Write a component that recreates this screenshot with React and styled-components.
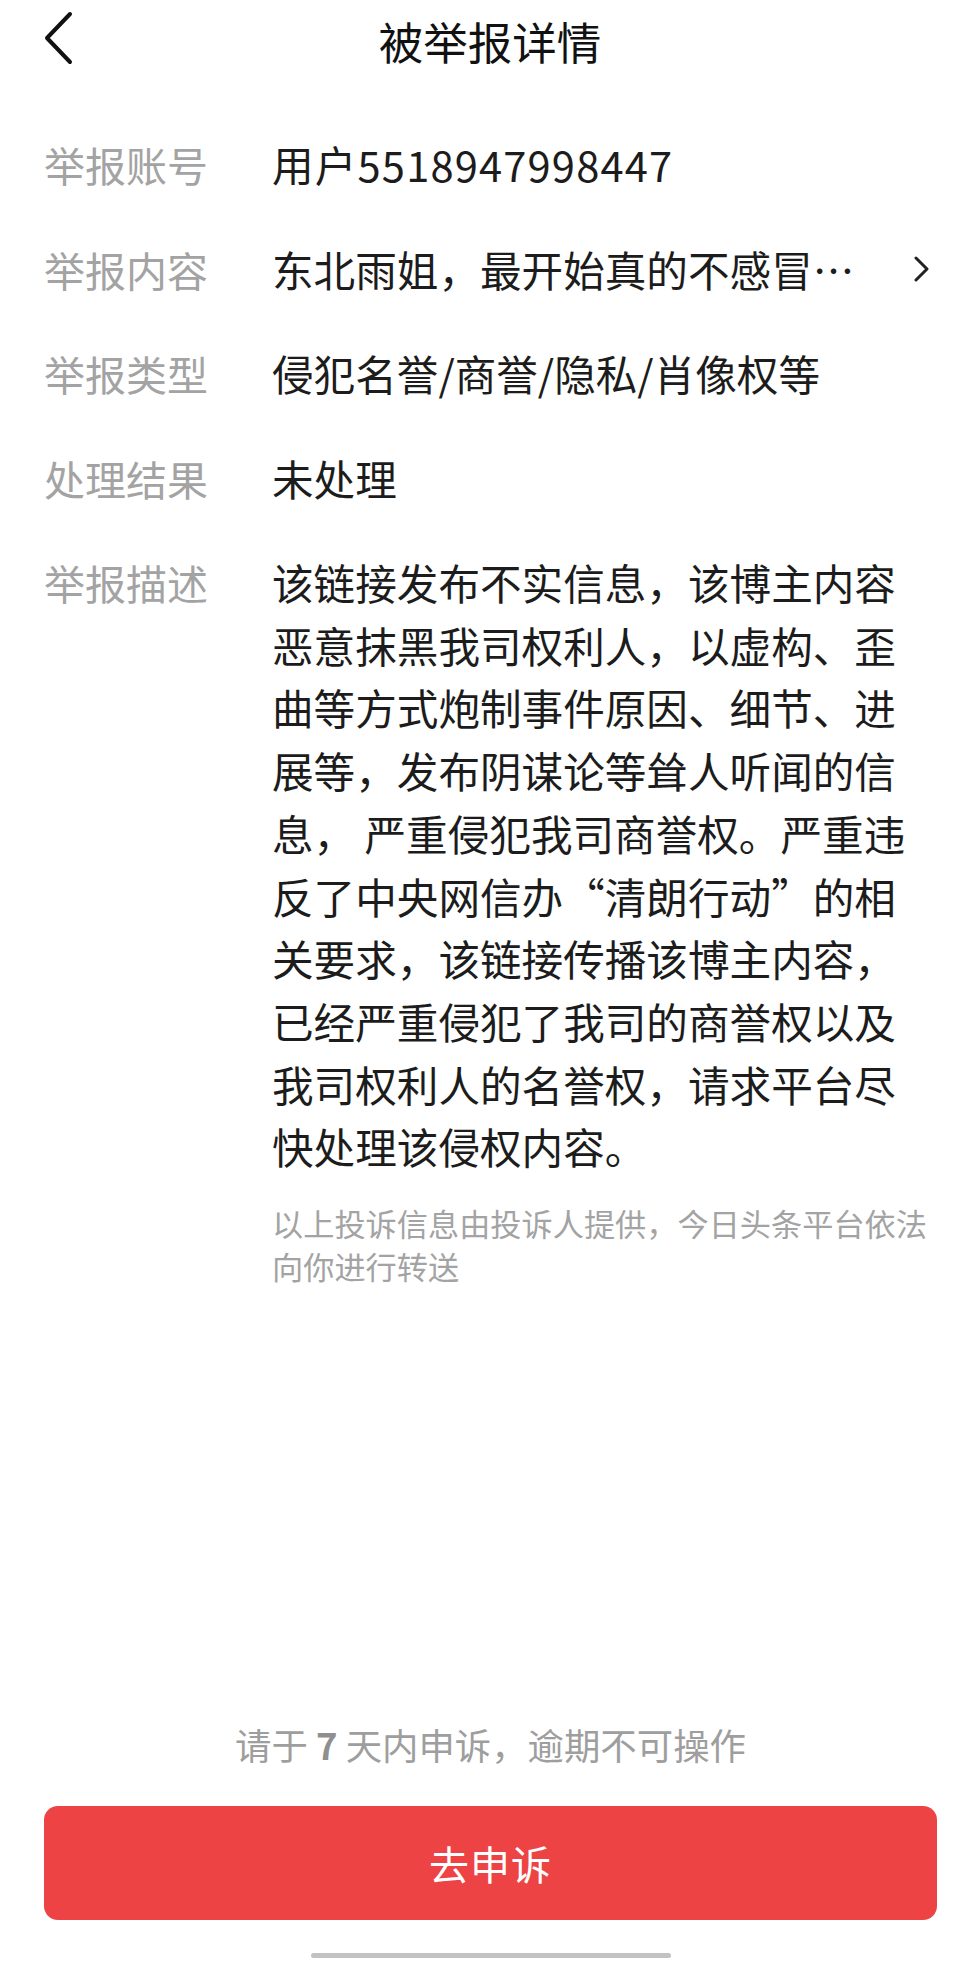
import React from "react";
import styled, { createGlobalStyle } from "styled-components";

const GlobalStyle = createGlobalStyle`
  html, body { margin: 0; padding: 0; background: #ffffff; }
  body {
    font-family: "Noto Sans CJK SC", "Noto Sans", sans-serif;
    -webkit-font-smoothing: antialiased;
  }
`;

const Page = styled.div`
  width: 980px;
  min-height: 1961px;
  display: flex;
  flex-direction: column;
  background: #fff;
  box-sizing: border-box;
`;

const Header = styled.header`
  position: relative;
  height: 84px;
  display: flex;
  align-items: center;
  justify-content: center;
`;

const BackButton = styled.button`
  position: absolute;
  left: 36px;
  top: 6px;
  width: 46px;
  height: 64px;
  padding: 0;
  border: 0;
  background: none;
  display: flex;
  align-items: center;
  justify-content: center;
`;

const Title = styled.h1`
  margin: 0;
  margin-top: -2px;
  font-size: 44.5px;
  font-weight: 400;
  color: #111;
  line-height: 60px;
`;

const Content = styled.main`
  flex: 1;
  display: flex;
  flex-direction: column;
  gap: 41.8px;
  padding: 49px 44px 0 44px;
`;

const Row = styled.div`
  display: flex;
  align-items: flex-start;
`;

const Label = styled.div`
  flex: 0 0 228px;
  font-size: 41px;
  line-height: 62.7px;
  color: #a3a3a3;
`;

const Value = styled.div`
  flex: 1;
  min-width: 0;
  display: flex;
  align-items: center;
  font-size: 41.6px;
  line-height: 62.7px;
  color: #1c1c1c;
`;

const ValueText = styled.span`
  flex: 1;
  white-space: nowrap;
  overflow: hidden;
  letter-spacing: ${(p) => (p.$spaced ? "1.2px" : "0")};
`;

const Chevron = styled.span`
  display: flex;
  align-items: center;
  margin-right: 6px;
`;

const Description = styled.div`
  width: 650px;
  font-size: 41.6px;
  line-height: 62.7px;
  color: #1c1c1c;
`;

const Note = styled.p`
  width: 664px;
  margin: 23px 0 0 0;
  font-size: 31.2px;
  line-height: 43px;
  color: #a3a3a3;
`;

const Footer = styled.footer`
  display: flex;
  flex-direction: column;
  align-items: center;
  padding: 0 43px 0 44px;
`;

const Hint = styled.div`
  font-size: 36.4px;
  line-height: 48px;
  color: #9e9e9e;
`;

const Strong = styled.b`
  font-weight: 700;
  color: #8f8f8f;
`;

const AppealButton = styled.button`
  margin-top: 38px;
  width: 100%;
  height: 114px;
  border: 0;
  border-radius: 14px;
  background: #ee4345;
  color: #fff;
  font-family: inherit;
  font-size: 40px;
  letter-spacing: 1px;
`;

const HomeBar = styled.div`
  margin-top: 33px;
  margin-bottom: 3px;
  width: 360px;
  height: 5px;
  border-radius: 3px;
  background: #c2c2c2;
`;

function BackIcon() {
  return (
    <svg width="34" height="54" viewBox="0 0 34 54">
      <polyline
        points="28,3 5,27 28,51"
        fill="none"
        stroke="#111"
        strokeWidth="4"
        strokeLinecap="round"
        strokeLinejoin="round"
      />
    </svg>
  );
}

function RightIcon() {
  return (
    <svg width="18" height="26" viewBox="0 0 18 26">
      <polyline
        points="4,2 15,13 4,24"
        fill="none"
        stroke="#222"
        strokeWidth="3"
        strokeLinecap="round"
        strokeLinejoin="round"
      />
    </svg>
  );
}

const rows = [
  { label: "举报账号", value: "用户5518947998447", spaced: true },
  { label: "举报内容", value: "东北雨姐，最开始真的不感冒⋯", link: true },
  { label: "举报类型", value: "侵犯名誉/商誉/隐私/肖像权等" },
  { label: "处理结果", value: "未处理" },
];

const description =
  "该链接发布不实信息，该博主内容恶意抹黑我司权利人，以虚构、歪曲等方式炮制事件原因、细节、进展等，发布阴谋论等耸人听闻的信息， 严重侵犯我司商誉权。严重违反了中央网信办“清朗行动”的相关要求，该链接传播该博主内容，已经严重侵犯了我司的商誉权以及我司权利人的名誉权，请求平台尽快处理该侵权内容。";

export default function App() {
  return (
    <>
      <GlobalStyle />
      <Page lang="zh-CN">
        <Header>
          <BackButton aria-label="返回">
            <BackIcon />
          </BackButton>
          <Title>被举报详情</Title>
        </Header>
        <Content>
          {rows.map((r) => (
            <Row key={r.label}>
              <Label>{r.label}</Label>
              <Value>
                <ValueText $spaced={r.spaced}>{r.value}</ValueText>
                {r.link && (
                  <Chevron>
                    <RightIcon />
                  </Chevron>
                )}
              </Value>
            </Row>
          ))}
          <Row>
            <Label>举报描述</Label>
            <div>
              <Description>{description}</Description>
              <Note>以上投诉信息由投诉人提供，今日头条平台依法向你进行转送</Note>
            </div>
          </Row>
        </Content>
        <Footer>
          <Hint>
            请于 <Strong>7</Strong> 天内申诉，逾期不可操作
          </Hint>
          <AppealButton>去申诉</AppealButton>
          <HomeBar />
        </Footer>
      </Page>
    </>
  );
}
